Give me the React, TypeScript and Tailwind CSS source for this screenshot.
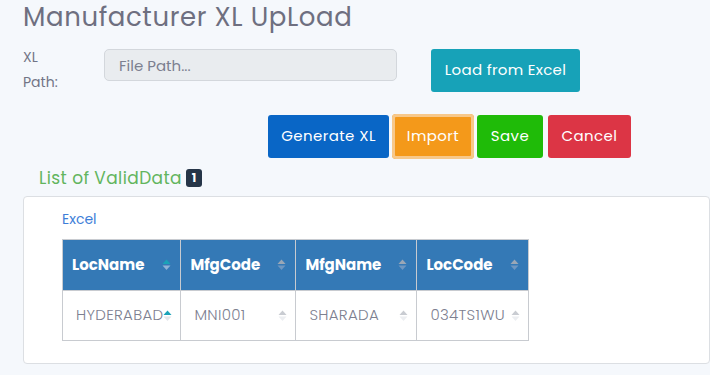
import { useState } from "react";

type Row = { LocName: string; MfgCode: string; MfgName: string; LocCode: string };

const columns: { key: keyof Row; label: string; width: string }[] = [
  { key: "LocName", label: "LocName", width: "w-[118px]" },
  { key: "MfgCode", label: "MfgCode", width: "w-[115px]" },
  { key: "MfgName", label: "MfgName", width: "w-[121px]" },
  { key: "LocCode", label: "LocCode", width: "w-[112px]" },
];

const rows: Row[] = [
  { LocName: "HYDERABAD", MfgCode: "MNI001", MfgName: "SHARADA", LocCode: "034TS1WU" },
];

function SortIcon({ active, light }: { active?: boolean; light?: boolean }) {
  const up = active ? "#1aa3b8" : light ? "#c9ccd2" : "#9aa7b6";
  const down = active ? (light ? "#e3e6ea" : "#8fb3d6") : light ? "#eceef1" : "#6f97c1";
  return (
    <svg width="9" height="12" viewBox="0 0 9 12" className="shrink-0">
      <path d="M4.5 0.5 L8.5 5 L0.5 5 Z" fill={up} />
      <path d="M0.5 6.5 L8.5 6.5 L4.5 11 Z" fill={down} />
    </svg>
  );
}

export default function App() {
  const [path, setPath] = useState("");

  return (
    <div
      className="w-[717px] h-[375px] overflow-hidden bg-white"
      style={{ fontFamily: "Poppins, 'Open Sans', Inter, sans-serif" }}
    >
      <div className="w-[710px] h-full bg-[#f5f8fc] pl-[23px] pt-[2px]">
        <h1 className="text-[26px] leading-[30px] text-[#6e6f80] tracking-[0.6px]">
          Manufacturer XL UpLoad
        </h1>

        {/* File path row */}
        <div className="flex items-start mt-[17px]">
          <label className="w-[81px] text-[14px] leading-[25px] text-[#727586] -mt-[4px]">
            XL
            <br />
            Path:
          </label>
          <input
            value={path}
            onChange={(e) => setPath(e.target.value)}
            placeholder="File Path..."
            className="w-[293px] h-[32px] rounded-[5px] border border-[#d3d7dc] bg-[#e9ecef] px-[14px] text-[15px] text-[#6c757d] placeholder:text-[#7c8090] outline-none"
          />
          <button className="ml-[34px] h-[43px] w-[149px] rounded-[3px] bg-[#17a2b8] text-[15px] tracking-[0.3px] text-white">
            Load from Excel
          </button>
        </div>

        {/* Action buttons */}
        <div className="flex items-center gap-[3px] ml-[245px] mt-[19px]">
          <button className="h-[43px] w-[121px] rounded-[3px] bg-[#0966c6] text-[15px] tracking-[0.4px] text-white">
            Generate XL
          </button>
          <button className="h-[45px] w-[82px] rounded-[4px] bg-[#f4991a] text-[15px] tracking-[0.4px] text-white ring-[3px] ring-[#f7c88a] ring-inset">
            Import
          </button>
          <button className="h-[43px] w-[66px] rounded-[3px] bg-[#1fbb08] text-[15px] tracking-[0.4px] text-white">
            Save
          </button>
          <button className="ml-[2px] h-[43px] w-[83px] rounded-[3px] bg-[#dc3545] text-[15px] tracking-[0.4px] text-white">
            Cancel
          </button>
        </div>

        {/* List header */}
        <div className="flex items-center gap-[4px] ml-[16px] mt-[8px]">
          <span className="text-[17px] leading-[22px] tracking-[0.4px] text-[#62b55e]">List of ValidData</span>
          <span className="flex h-[18px] w-[16px] items-center justify-center rounded-[3px] bg-[#263548] text-[12px] font-bold text-white">
            1
          </span>
        </div>

        {/* Card */}
        <div className="mt-[7px] h-[168px] rounded-[4px] border border-[#dcdfe3] bg-white pl-[38px] pt-[10px]">
          <a className="text-[14px] leading-[20px] text-[#3d7ed8]">Excel</a>
          <table className="mt-[8px] border-collapse text-[14px]">
            <thead>
              <tr>
                {columns.map((c, i) => (
                  <th
                    key={c.key}
                    className={`${c.width} h-[51px] border border-[#c8cbd0] bg-[#3479b6] pl-[9px] pr-[9px] text-left`}
                  >
                    <div className="flex items-center justify-between">
                      <span className="text-[15px] font-bold text-white">{c.label}</span>
                      <SortIcon active={i === 0} />
                    </div>
                  </th>
                ))}
              </tr>
            </thead>
            <tbody>
              {rows.map((r, ri) => (
                <tr key={ri}>
                  {columns.map((c, i) => (
                    <td
                      key={c.key}
                      className="h-[50px] border border-[#c8cbd0] pl-[13px] pr-[8px]"
                    >
                      <div className="flex items-center justify-between">
                        <span className="text-[15px] font-light tracking-[0.3px] text-[#7d8090]">{r[c.key]}</span>
                        <SortIcon active={i === 0} light />
                      </div>
                    </td>
                  ))}
                </tr>
              ))}
            </tbody>
          </table>
        </div>
      </div>
    </div>
  );
}
